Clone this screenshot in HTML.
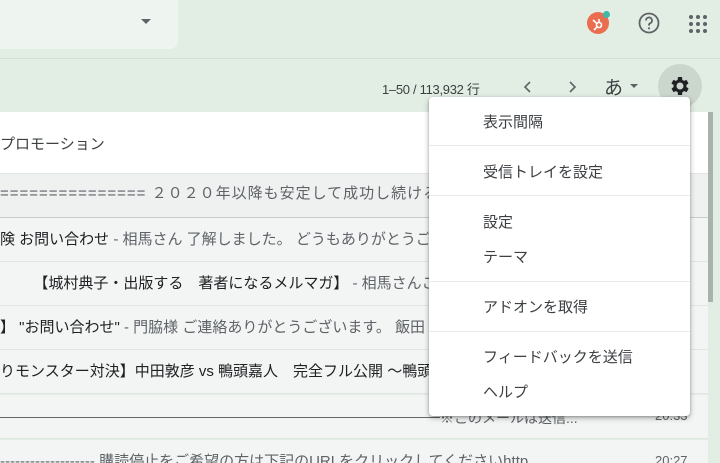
<!DOCTYPE html>
<html><head><meta charset="utf-8"><style>
*{margin:0;padding:0;box-sizing:border-box}
html,body{width:720px;height:463px;overflow:hidden}
body{background:#e2eee4;font-family:"Liberation Sans","Noto Sans CJK JP",sans-serif;position:relative;color:#202124}
.abs{position:absolute}
.row{position:absolute;left:0;width:708px;height:44px;background:#f2f5f3;border-bottom:1px solid #e2e6e3;font-size:14px;line-height:44px;white-space:nowrap;overflow:hidden;color:#5f6368}
.row b{color:#202124;font-weight:normal}
.menu{position:absolute;left:429px;top:97px;width:261px;height:319px;background:#fff;border-radius:4px;box-shadow:0 2px 6px rgba(0,0,0,.3),0 1px 2px rgba(0,0,0,.2);font-size:15px;color:#3c4043}
.menu div{position:absolute;left:54px}
.menu hr{position:absolute;left:0;width:100%;border:0;border-top:1px solid #e8eaed}
</style></head><body>
<div class="abs" style="left:0;top:0;width:178px;height:49px;background:#eef4ef;border-radius:0 0 8px 0"></div>
<div class="abs" style="left:141px;top:19px;width:0;height:0;border-left:5px solid transparent;border-right:5px solid transparent;border-top:5px solid #5f6368"></div>
<div class="abs" style="left:0;top:58px;width:720px;height:1px;background:#d3e0d5"></div>
<div class="abs" style="left:587px;top:12px;width:22px;height:22px;border-radius:50%;background:#ea6d4f"></div>
<div class="abs" style="left:603px;top:11px;width:7px;height:7px;border-radius:50%;background:#3fb8a6"></div>
<svg class="abs" style="left:587px;top:12px" width="22" height="22"><g stroke="#fff" stroke-width="1.6" fill="none"><circle cx="12" cy="13" r="2.5"/><path d="M12 10.5V7M9.8 11.5L6 8M10 15l-3 3"/></g></svg>
<svg class="abs" style="left:637px;top:11px" width="24" height="24"><circle cx="12" cy="12" r="9.5" stroke="#5f6368" stroke-width="1.8" fill="none"/><path d="M9 9.5a3 3 0 1 1 4.2 2.7c-.8.4-1.2 1-1.2 1.8v.6" stroke="#5f6368" stroke-width="1.8" fill="none"/><circle cx="12" cy="17.3" r="1.1" fill="#5f6368"/></svg>
<svg class="abs" style="left:688px;top:14px" width="20" height="20" fill="#5f6368"><circle cx="3" cy="3" r="2"/><circle cx="10" cy="3" r="2"/><circle cx="17" cy="3" r="2"/><circle cx="3" cy="10" r="2"/><circle cx="10" cy="10" r="2"/><circle cx="17" cy="10" r="2"/><circle cx="3" cy="17" r="2"/><circle cx="10" cy="17" r="2"/><circle cx="17" cy="17" r="2"/></svg>
<div class="abs" style="left:382px;top:79px;font-size:13px;color:#3c4043;letter-spacing:-0.3px">1–50 / 113,932 行</div>
<svg class="abs" style="left:522px;top:80px" width="12" height="14"><path d="M8 2L3 7l5 5" stroke="#5f6368" stroke-width="1.6" fill="none"/></svg>
<svg class="abs" style="left:566px;top:80px" width="12" height="14"><path d="M4 2l5 5-5 5" stroke="#5f6368" stroke-width="1.6" fill="none"/></svg>
<div class="abs" style="left:604px;top:73px;font-size:19px;color:#3c4043">あ</div>
<div class="abs" style="left:630px;top:84px;border-left:4px solid transparent;border-right:4px solid transparent;border-top:4px solid #5f6368"></div>
<div class="abs" style="left:658px;top:64px;width:44px;height:44px;border-radius:50%;background:#cbd6cd"></div>
<svg class="abs" style="left:668px;top:74px" width="24" height="24" viewBox="0 0 24 24"><path fill="#202124" d="M19.4 13a7.5 7.5 0 0 0 0-2l2.1-1.6-2-3.5-2.5 1a7.4 7.4 0 0 0-1.7-1L15 3h-4l-.4 2.9a7.4 7.4 0 0 0-1.7 1l-2.5-1-2 3.5L6.6 11a7.5 7.5 0 0 0 0 2l-2.1 1.6 2 3.5 2.5-1a7.4 7.4 0 0 0 1.7 1L11 21h4l.4-2.9a7.4 7.4 0 0 0 1.7-1l2.5 1 2-3.5zM13 15.5a3.5 3.5 0 1 1 0-7 3.5 3.5 0 0 1 0 7z" transform="translate(-1 0)"/></svg>
<div class="abs" style="left:0;top:112px;width:708px;height:62px;background:#fff;border-bottom:1px solid #e2e6e3"></div>
<div class="abs" style="left:0;top:133px;font-size:15px;color:#3c4043">プロモーション</div>
<div class="row" style="top:174px;background:#eef1ef;border-bottom:1px solid #c9cdca;font-size:15px;letter-spacing:1px;line-height:40px">===============&nbsp;２０２０年以降も安定して成功し続ける</div>
<div class="row" style="top:218px;font-size:15px"><b>険 お問い合わせ</b> - 相馬さん 了解しました。 どうもありがとうござい</div>
<div class="row" style="top:262px;font-size:15px"><b>&nbsp;&nbsp;&nbsp;&nbsp;&nbsp;&nbsp;&nbsp;&nbsp;【城村典子・出版する　著者になるメルマガ】</b> - 相馬さんこんにちは</div>
<div class="row" style="top:306px;font-size:15px"><b>】 "お問い合わせ"</b> - 門脇様 ご連絡ありがとうございます。 飯田</div>
<div class="row" style="top:350px;font-size:15px"><b>りモンスター対決】中田敦彦 vs 鴨頭嘉人　完全フル公開 〜鴨頭</b></div>
<div class="row" style="top:395px"></div>
<div class="abs" style="left:0;top:417px;width:440px;height:1px;background:#666"></div>
<div class="abs" style="left:440px;top:408px;font-size:14px;color:#5f6368">※このメールは送信...</div>
<div class="abs" style="left:655px;top:408px;font-size:13px;color:#5f6368">20:33</div>
<div class="row" style="top:440px;height:23px;line-height:44px;font-size:15px;border:0">------------------- 購読停止をご希望の方は下記のURLをクリックしてくださいhttp</div>
<div class="abs" style="left:655px;top:453px;font-size:13px;color:#5f6368">20:27</div>
<div class="abs" style="left:708px;top:112px;width:5px;height:190px;background:#a9b3ab"></div>
<div class="menu">
<div style="top:14px">表示間隔</div>
<hr style="top:48px">
<div style="top:64px">受信トレイを設定</div>
<hr style="top:98px">
<div style="top:114px">設定</div>
<div style="top:149px">テーマ</div>
<hr style="top:184px">
<div style="top:199px">アドオンを取得</div>
<hr style="top:234px">
<div style="top:249px">フィードバックを送信</div>
<div style="top:284px">ヘルプ</div>
</div>
</body></html>
